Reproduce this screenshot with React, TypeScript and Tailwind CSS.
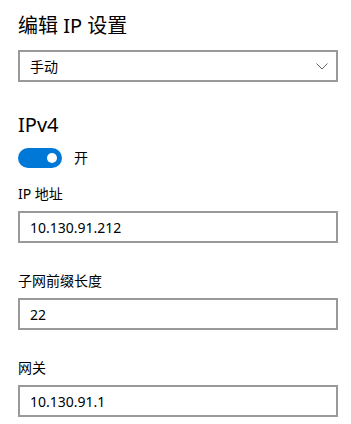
import React, { useState } from 'react';

const font = { fontFamily: '"Segoe UI", "Noto Sans", "Noto Sans CJK SC", sans-serif' };

const Field: React.FC<{ label: string; value: string }> = ({ label, value }) => (
  <div className="flex flex-col gap-[7px]">
    <label className="text-[14px] leading-[20px] text-black">{label}</label>
    <div className="h-[32px] w-[320px] border-2 border-[#999999] bg-white flex items-center px-[10px]">
      <span className="text-[14px] text-black">{value}</span>
    </div>
  </div>
);

export default function App() {
  const [on, setOn] = useState(true);

  return (
    <div className="w-[351px] h-[424px] bg-white px-[18px] pt-[12px]" style={font}>
      <h2 className="text-[20px] leading-[28px] text-black">编辑 IP 设置</h2>

      {/* mode dropdown */}
      <div className="mt-[10px] h-[32px] w-[320px] border-2 border-[#999999] flex items-center justify-between pl-[10px] pr-[8px]">
        <span className="text-[14px] text-black">手动</span>
        <svg width="12" height="7" viewBox="0 0 12 7" fill="none">
          <path d="M0.5 0.5 L6 6 L11.5 0.5" stroke="#666" strokeWidth="1" />
        </svg>
      </div>

      <div className="mt-[29px] text-[20px] leading-[28px] text-black">IPv4</div>

      <div className="mt-[8px] flex items-center gap-[12px]">
        <button
          onClick={() => setOn(!on)}
          className={`relative w-[44px] h-[20px] rounded-full ${on ? 'bg-[#0078d7]' : 'bg-white border-2 border-black'}`}
        >
          <span
            className={`absolute top-[5px] w-[10px] h-[10px] rounded-full ${on ? 'bg-white right-[5px]' : 'bg-black left-[5px]'}`}
          />
        </button>
        <span className="text-[14px] text-black">{on ? '开' : '关'}</span>
      </div>

      <div className="mt-[16px] flex flex-col gap-[28px]">
        <Field label="IP 地址" value="10.130.91.212" />
        <Field label="子网前缀长度" value="22" />
        <Field label="网关" value="10.130.91.1" />
      </div>
    </div>
  );
}
